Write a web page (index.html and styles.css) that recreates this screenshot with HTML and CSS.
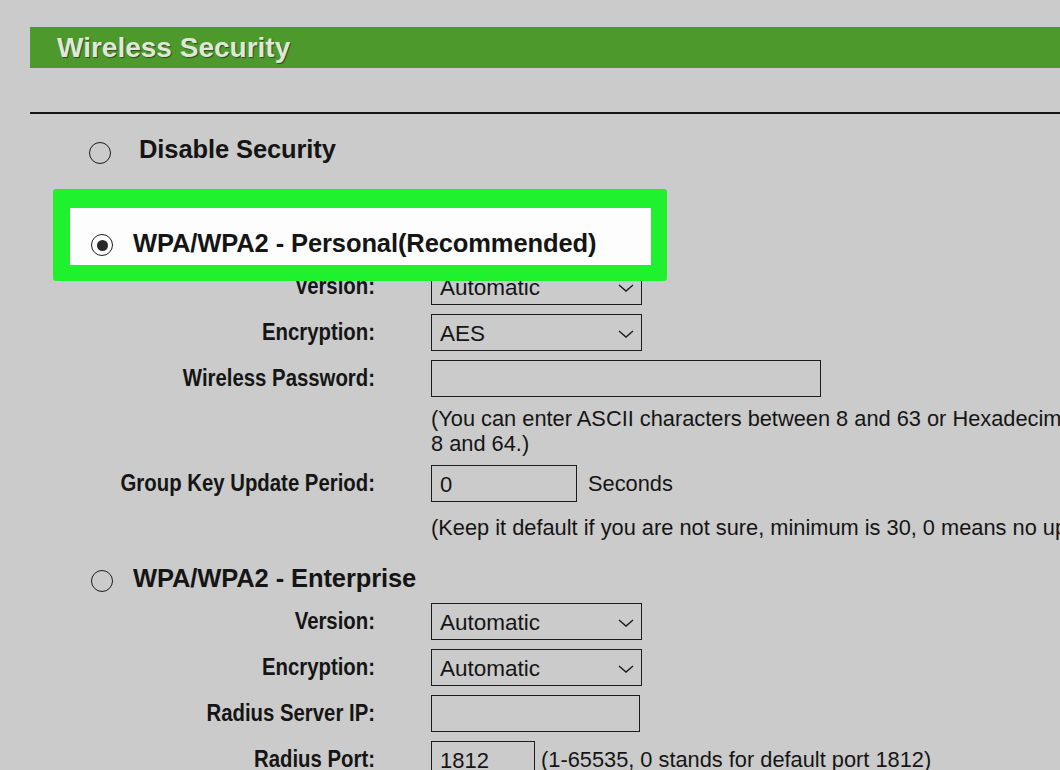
FILE: index.html
```html
<!DOCTYPE html>
<html>

<head>
	<meta http-equiv="Content-Type" content="text/html; charset=utf-8" />
	<title>Wireless Security</title>
	<link rel="stylesheet" href="styles.css">
</head>

<body>
	<div class="page">
		<h1 class="title">Wireless Security</h1>
		<div class="rule"></div>

		<label class="option disable">
			<span class="radio"></span>
			<span>Disable Security</span>
		</label>

		<div class="highlight">
			<label class="option">
				<span class="radio checked"></span>
				<span>WPA/WPA2 - Personal(Recommended)</span>
			</label>
		</div>

		<div class="fields personal">
			<span class="label">Version:</span>
			<div class="select"><span>Automatic</span><svg width="16" height="8" viewBox="0 0 16 8"><polyline points="1,1 8,7 15,1" /></svg></div>

			<span class="label">Encryption:</span>
			<div class="select"><span>AES</span><svg width="16" height="8" viewBox="0 0 16 8"><polyline points="1,1 8,7 15,1" /></svg></div>

			<span class="label">Wireless Password:</span>
			<input class="input wide" type="text" value="">

			<p class="help">(You can enter ASCII characters between 8 and 63 or Hexadecimal characters between<br>8 and 64.)</p>

			<span class="label">Group Key Update Period:</span>
			<div class="inline">
				<input class="input short" type="text" value="0">
				<span>Seconds</span>
			</div>

			<p class="help one">(Keep it default if you are not sure, minimum is 30, 0 means no update)</p>
		</div>

		<label class="option enterprise">
			<span class="radio"></span>
			<span>WPA/WPA2 - Enterprise</span>
		</label>

		<div class="fields">
			<span class="label">Version:</span>
			<div class="select"><span>Automatic</span><svg width="16" height="8" viewBox="0 0 16 8"><polyline points="1,1 8,7 15,1" /></svg></div>

			<span class="label">Encryption:</span>
			<div class="select"><span>Automatic</span><svg width="16" height="8" viewBox="0 0 16 8"><polyline points="1,1 8,7 15,1" /></svg></div>

			<span class="label">Radius Server IP:</span>
			<input class="input ip" type="text" value="">

			<span class="label">Radius Port:</span>
			<div class="inline">
				<input class="input port" type="text" value="1812">
				<span>(1-65535, 0 stands for default port 1812)</span>
			</div>
		</div>
	</div>
</body>

</html>
```

FILE: styles.css
```css
html,
body {
	margin: 0;
	height: 100%;
	overflow: hidden;
}

body {
	font-family: "Liberation Sans", Arial, sans-serif;
	background-color: #cbcbcb;
	color: #151515;
}

.page {
	width: 1060px;
	overflow: hidden;
}

.title {
	margin: 27px 0 0 30px;
	height: 41px;
	padding-left: 27px;
	background-color: #4e992b;
	color: #dfe8d7;
	font-size: 28px;
	font-weight: bold;
	line-height: 41px;
	text-shadow: 1px 1px 1px #2d4a20;
}

.rule {
	margin: 44px 0 0 30px;
	height: 2px;
	background-color: #161616;
}

.option {
	display: flex;
	align-items: flex-start;
	gap: 20px;
	font-size: 25.5px;
	font-weight: bold;
	line-height: 30px;
	letter-spacing: -0.1px;
}

.option.disable {
	margin-top: 20px;
	padding-left: 89px;
	gap: 28px;
}

.option.enterprise {
	margin-top: 22px;
	padding-left: 91px;
}

.radio {
	flex: none;
	position: relative;
	width: 20px;
	height: 20px;
	margin-top: 8px;
	border: 1.7px solid #1d1d1d;
	border-radius: 50%;
}

.option.enterprise .radio {
	margin-top: 7px;
}

.radio.checked {
	margin-top: 6px;
	background-color: #fff;
}

.radio.checked:after {
	content: "";
	position: absolute;
	left: 4.5px;
	top: 4.5px;
	width: 11px;
	height: 11px;
	border-radius: 50%;
	background-color: #2a2a2a;
}

.highlight {
	position: relative;
	z-index: 1;
	width: 581px;
	margin: 25px 0 0 53px;
	border: solid #20f12f;
	border-width: 19px 16px 16px 17px;
	border-radius: 3px;
	background-color: #fdfdfd;
}

.highlight .option {
	height: 37px;
	padding: 20px 0 0 21px;
}

.fields {
	display: grid;
	grid-template-columns: 375px 1fr;
	column-gap: 56px;
	row-gap: 9px;
	align-items: center;
	margin-top: 10px;
}

.fields.personal {
	margin-top: -13px;
}

/* labels in the router page are set tall and narrow */
.label {
	text-align: right;
	font-size: 23px;
	font-weight: bold;
	line-height: 26px;
	margin-top: -2px;
	white-space: nowrap;
	transform: scaleX(0.885);
	transform-origin: right center;
}

.select,
.input {
	box-sizing: border-box;
	height: 37px;
	border: 1.6px solid #1c1c1c;
	background-color: transparent;
	font-family: inherit;
	font-size: 22.5px;
	color: #151515;
}

.select {
	display: flex;
	align-items: center;
	justify-content: space-between;
	width: 211px;
	padding: 2px 7px 0 8px;
}

.select svg {
	fill: none;
	stroke: #1c1c1c;
	stroke-width: 1.4;
}

.input {
	display: block;
	margin: 0;
	padding: 3px 0 0 8px;
	font-size: 22px;
	outline: none;
}

.input.wide {
	width: 390px;
}

.input.short {
	width: 146px;
}

.input.ip {
	width: 209px;
}

.input.port {
	width: 104px;
}

.inline {
	display: flex;
	align-items: center;
	gap: 11px;
	font-size: 21.8px;
	white-space: nowrap;
}

.fields .inline .port + span {
	margin-left: -5px;
}

.help {
	grid-column: 2;
	margin: 0;
	font-size: 21.8px;
	line-height: 25px;
	white-space: nowrap;
}

.help.one {
	padding-top: 4px;
	line-height: 26px;
}
```
